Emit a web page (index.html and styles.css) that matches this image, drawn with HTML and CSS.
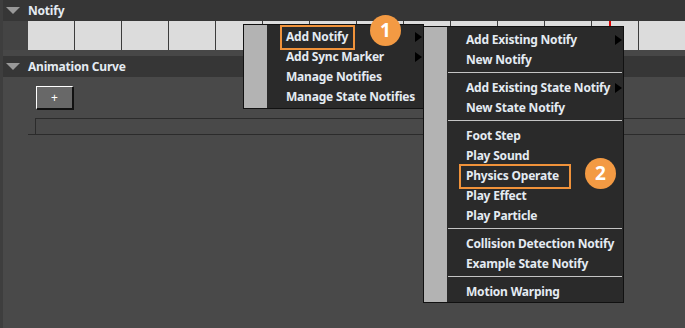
FILE: index.html
```html
<!DOCTYPE html>
<html lang="en">
<head>
  <meta charset="UTF-8">
  <title>Notify Menu</title>
  <link rel="stylesheet" href="styles.css">
</head>
<body>
  <div class="panel">
    <div class="section-header">
      <span class="arrow-down"></span>
      <span class="title">Notify</span>
    </div>
    <div class="track-row">
      <div class="strip">
        <div class="cell"></div><div class="cell"></div><div class="cell"></div>
        <div class="cell"></div><div class="cell"></div><div class="cell"></div>
        <div class="cell"></div><div class="cell"></div><div class="cell"></div>
        <div class="cell"></div><div class="cell"></div><div class="cell"></div>
        <div class="cell"></div><div class="cell"></div>
        <span class="playhead"></span>
      </div>
    </div>
    <div class="gap"></div>
    <div class="section-header">
      <span class="arrow-down"></span>
      <span class="title">Animation Curve</span>
    </div>
    <div class="curve-body">
      <button class="add-btn">+</button>
      <div class="curve-track">
        <div class="curve-box"></div>
      </div>
    </div>
  </div>

  <!-- context menu -->
  <div class="menu menu-main">
    <div class="menu-strip"></div>
    <ul class="menu-items">
      <li>Add Notify<span class="sub"></span></li>
      <li>Add Sync Marker<span class="sub"></span></li>
      <li>Manage Notifies</li>
      <li>Manage State Notifies</li>
    </ul>
  </div>

  <div class="menu menu-sub">
    <div class="menu-strip"></div>
    <ul class="menu-items">
      <li>Add Existing Notify<span class="sub"></span></li>
      <li>New Notify</li>
      <li class="sep"></li>
      <li>Add Existing State Notify<span class="sub"></span></li>
      <li>New State Notify</li>
      <li class="sep"></li>
      <li>Foot Step</li>
      <li>Play Sound</li>
      <li>Physics Operate</li>
      <li>Play Effect</li>
      <li>Play Particle</li>
      <li class="sep"></li>
      <li>Collision Detection Notify</li>
      <li>Example State Notify</li>
      <li class="sep"></li>
      <li>Motion Warping</li>
    </ul>
  </div>

  <!-- annotations -->
  <div class="mark mark-1"></div>
  <div class="badge badge-1">1</div>
  <div class="mark mark-2"></div>
  <div class="badge badge-2">2</div>
</body>
</html>
```

FILE: styles.css
```css
body {
  margin: 0;
  width: 685px;
  height: 328px;
  overflow: hidden;
  background-color: #494949;
  font-family: "Noto Sans", "Open Sans", sans-serif;
  font-size: 12px;
  font-weight: bold;
  letter-spacing: -0.2px;
  color: #e4ebf2;
}
.panel {
  border-left: 3px solid #3e3e3e;
  height: 328px;
}
.section-header {
  display: flex;
  align-items: center;
  height: 21px;
  background-color: #363636;
}
.arrow-down {
  width: 0;
  height: 0;
  margin: 0 8px 0 3px;
  border-left: 7px solid transparent;
  border-right: 7px solid transparent;
  border-top: 7px solid #999;
}
.title {
  line-height: 21px;
}
.track-row {
  height: 29px;
  padding-left: 25px;
  background-color: #444;
}
.strip {
  position: relative;
  display: flex;
  height: 29px;
  background-color: #dcdcdc;
}
.cell {
  flex: none;
  width: 46px;
  height: 29px;
  border-right: 1px solid #3c3c3c;
}
.playhead {
  position: absolute;
  left: 581px;
  top: 0;
  width: 2px;
  height: 6px;
  background-color: #e00000;
}
.gap {
  height: 6px;
  background-color: #474747;
}
.curve-body {
  padding: 9px 0 0 25px;
}
.add-btn {
  display: block;
  margin-left: 8px;
  width: 38px;
  height: 24px;
  padding: 0;
  background-color: #686868;
  border-top: 1px solid #fff;
  border-left: 1px solid #fff;
  border-right: 2px solid #111;
  border-bottom: 2px solid #111;
  color: #fff;
  font-family: "Noto Sans", sans-serif;
  font-size: 12px;
}
.curve-track {
  margin-top: 8px;
  padding-left: 7px;
  border-bottom: 1px solid #2b2b2b;
}
.curve-box {
  height: 15px;
  border-top: 1px solid #2b2b2b;
  border-left: 1px solid #2b2b2b;
}
.menu {
  position: absolute;
  display: flex;
  background-color: #2a2a2a;
  border: 1px solid #111;
}
.menu-main {
  left: 243px;
  top: 24px;
  width: 179px;
  height: 83px;
}
.menu-sub {
  left: 423px;
  top: 26px;
  width: 199px;
  height: 275px;
}
.menu-strip {
  flex: none;
  width: 23px;
  background-color: #b3b3b3;
}
.menu-items {
  flex: 1;
  list-style: none;
  margin: 0;
  padding: 3px 0 0 0;
}
.menu-main .menu-items {
  padding-top: 2px;
}
.menu-items li {
  display: flex;
  align-items: center;
  height: 20px;
  line-height: 20px;
  padding-left: 19px;
  padding-right: 1px;
  white-space: nowrap;
}
.menu-items .sub {
  margin-left: auto;
  width: 0;
  height: 0;
  border-top: 5px solid transparent;
  border-bottom: 5px solid transparent;
  border-left: 7px solid #000;
}
.menu-items li.sep {
  height: 1px;
  padding: 0;
  margin: 2px 1px 5px 1px;
  background-color: #c4c4c4;
}
.mark {
  position: absolute;
  border: 2px solid #f0923a;
}
.mark-1 {
  left: 280px;
  top: 25px;
  width: 71px;
  height: 21px;
}
.mark-2 {
  left: 459px;
  top: 164px;
  width: 108px;
  height: 21px;
}
.badge {
  position: absolute;
  width: 31px;
  height: 31px;
  border-radius: 50%;
  background-color: #f39a43;
  color: #fff;
  font-size: 19px;
  font-weight: bold;
  letter-spacing: 0;
  line-height: 31px;
  text-align: center;
}
.badge-1 {
  left: 370px;
  top: 15px;
}
.badge-2 {
  left: 585px;
  top: 158px;
}
```
